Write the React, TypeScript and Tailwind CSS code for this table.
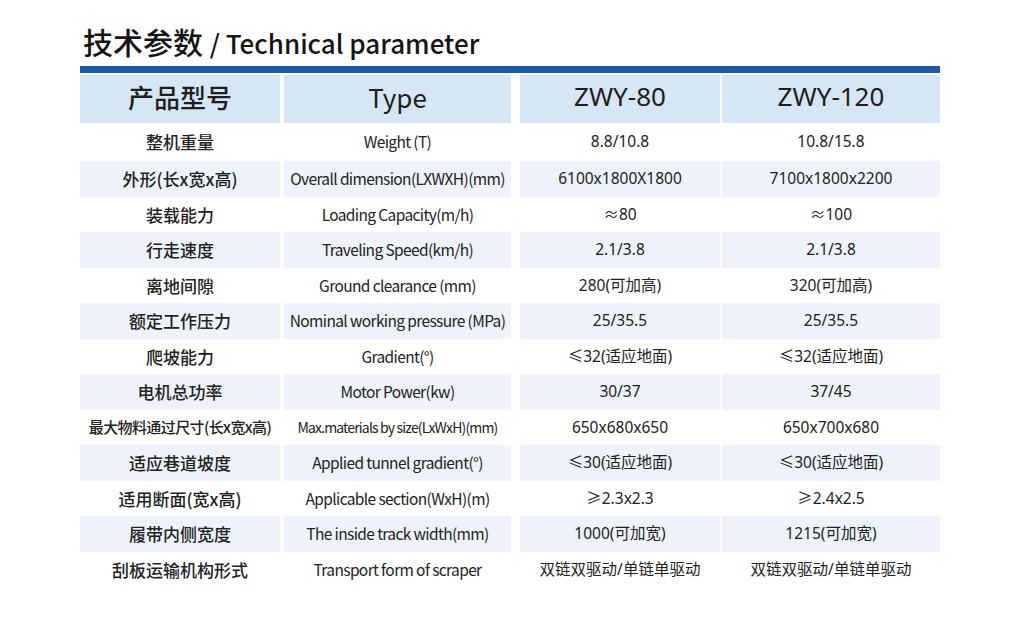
const rows: [string, string, string, string][] = [
  ["整机重量", "Weight (T)", "8.8/10.8", "10.8/15.8"],
  ["外形(长x宽x高)", "Overall dimension(LXWXH)(mm)", "6100x1800X1800", "7100x1800x2200"],
  ["装载能力", "Loading Capacity(m/h)", "≈80", "≈100"],
  ["行走速度", "Traveling Speed(km/h)", "2.1/3.8", "2.1/3.8"],
  ["离地间隙", "Ground clearance (mm)", "280(可加高)", "320(可加高)"],
  ["额定工作压力", "Nominal working pressure (MPa)", "25/35.5", "25/35.5"],
  ["爬坡能力", "Gradient(°)", "≤32(适应地面)", "≤32(适应地面)"],
  ["电机总功率", "Motor Power(kw)", "30/37", "37/45"],
  ["最大物料通过尺寸(长x宽x高)", "Max.materials by size(LxWxH)(mm)", "650x680x650", "650x700x680"],
  ["适应巷道坡度", "Applied tunnel gradient(°)", "≤30(适应地面)", "≤30(适应地面)"],
  ["适用断面(宽x高)", "Applicable section(WxH)(m)", "≥2.3x2.3", "≥2.4x2.5"],
  ["履带内侧宽度", "The inside track width(mm)", "1000(可加宽)", "1215(可加宽)"],
  ["刮板运输机构形式", "Transport form of scraper", "双链双驱动/单链单驱动", "双链双驱动/单链单驱动"],
];

const cjk = "font-['Noto_Sans_CJK_SC',sans-serif]";
const mixed = "font-['Noto_Sans','Noto_Sans_CJK_SC',sans-serif]";

export default function App() {
  return (
    <div className="h-[621px] w-[1024px] bg-white pt-[22px] text-[#222]">
      <div className="ml-[80px] w-[860px]">
        <h1 className={`${cjk} pl-[3px] text-[30px] font-medium leading-[38px] text-[#141414]`}>
          技术参数 <span className="text-[26px]">/ Technical parameter</span>
        </h1>
        <div className="mt-[4px] h-[7px] bg-[#1b5aa6]" />
        <div className="mt-[2px] flex h-[48px] text-[26px] text-[#1e1e1e]">
          <div className={`${cjk} flex w-[200px] items-center justify-center bg-[#d6e6f4] pb-[6px] font-medium`}>产品型号</div>
          <div className={`${cjk} ml-[4px] flex w-[227px] items-center justify-center bg-[#d6e6f4] pb-[6px]`}>Type</div>
          <div className={`${mixed} ml-[9px] flex w-[200px] items-center justify-center bg-[#d6e6f4] pb-[6px]`}>ZWY-80</div>
          <div className={`${mixed} ml-[2px] flex w-[218px] items-center justify-center bg-[#d6e6f4] pb-[6px]`}>ZWY-120</div>
        </div>
        {rows.map((r, i) => {
          const bg = i % 2 === 1 ? "bg-[#edf3f9]" : "bg-white";
          return (
            <div key={r[0]} className={`flex ${i === 0 ? "h-[38px]" : "h-[35.5px]"}`}>
              <div
                className={`${cjk} flex w-[200px] items-center justify-center font-medium ${bg} ${
                  i === 8 ? "text-[15px] tracking-[-0.04em]" : "text-[17px]"
                }`}
              >
                {r[0]}
              </div>
              <div
                className={`${cjk} ml-[4px] flex w-[227px] items-center justify-center ${bg} ${
                  i === 8 ? "text-[14px] tracking-[-0.06em]" : "text-[15.5px] tracking-[-0.04em]"
                }`}
              >
                {r[1]}
              </div>
              <div className={`${mixed} ml-[9px] flex w-[200px] items-center justify-center ${bg} text-[15.5px]`}>
                {r[2]}
              </div>
              <div className={`${mixed} ml-[2px] flex w-[218px] items-center justify-center ${bg} text-[15.5px]`}>
                {r[3]}
              </div>
            </div>
          );
        })}
      </div>
    </div>
  );
}
